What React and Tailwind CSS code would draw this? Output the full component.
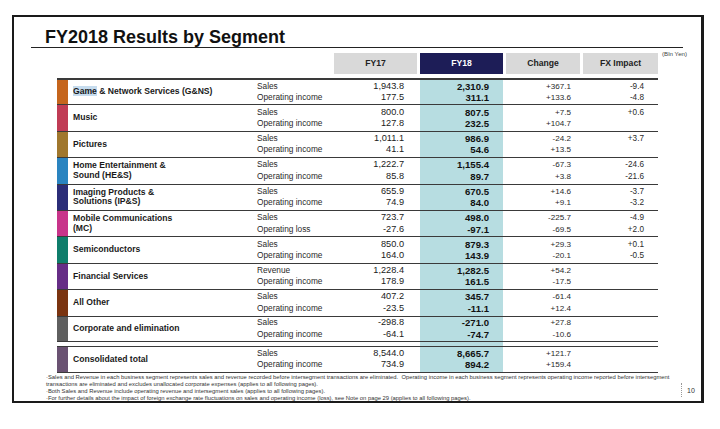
// FY2018 segment results slide
const rows = [
  { color: "bg-[#c5651d]", name: <><span className="bg-[#c6dcee]">Game</span> & Network Services (G&NS)</>, labels: ["Sales", "Operating income"], fy17: ["1,943.8", "177.5"], fy18: ["2,310.9", "311.1"], change: ["+367.1", "+133.6"], fx: ["-9.4", "-4.8"] },
  { color: "bg-[#c03c55]", name: "Music", labels: ["Sales", "Operating income"], fy17: ["800.0", "127.8"], fy18: ["807.5", "232.5"], change: ["+7.5", "+104.7"], fx: ["+0.6", ""] },
  { color: "bg-[#a0772d]", name: "Pictures", labels: ["Sales", "Operating income"], fy17: ["1,011.1", "41.1"], fy18: ["986.9", "54.6"], change: ["-24.2", "+13.5"], fx: ["+3.7", ""] },
  { color: "bg-[#2a84c0]", name: <>Home Entertainment &<br />Sound (HE&S)</>, labels: ["Sales", "Operating income"], fy17: ["1,222.7", "85.8"], fy18: ["1,155.4", "89.7"], change: ["-67.3", "+3.8"], fx: ["-24.6", "-21.6"] },
  { color: "bg-[#2b2d78]", name: <>Imaging Products &<br />Solutions (IP&S)</>, labels: ["Sales", "Operating income"], fy17: ["655.9", "74.9"], fy18: ["670.5", "84.0"], change: ["+14.6", "+9.1"], fx: ["-3.7", "-3.2"] },
  { color: "bg-[#c8348a]", name: <>Mobile Communications<br />(MC)</>, labels: ["Sales", "Operating loss"], fy17: ["723.7", "-27.6"], fy18: ["498.0", "-97.1"], change: ["-225.7", "-69.5"], fx: ["-4.9", "+2.0"] },
  { color: "bg-[#0f7d6b]", name: "Semiconductors", labels: ["Sales", "Operating income"], fy17: ["850.0", "164.0"], fy18: ["879.3", "143.9"], change: ["+29.3", "-20.1"], fx: ["+0.1", "-0.5"] },
  { color: "bg-[#662d86]", name: "Financial Services", labels: ["Revenue", "Operating income"], fy17: ["1,228.4", "178.9"], fy18: ["1,282.5", "161.5"], change: ["+54.2", "-17.5"], fx: ["", ""] },
  { color: "bg-[#7a3410]", name: "All Other", labels: ["Sales", "Operating income"], fy17: ["407.2", "-23.5"], fy18: ["345.7", "-11.1"], change: ["-61.4", "+12.4"], fx: ["", ""] },
  { color: "bg-[#5f5f5f]", name: "Corporate and elimination", labels: ["Sales", "Operating income"], fy17: ["-298.8", "-64.1"], fy18: ["-271.0", "-74.7"], change: ["+27.8", "-10.6"], fx: ["", ""] },
];

const total = { color: "bg-[#6a5272]", name: "Consolidated total", labels: ["Sales", "Operating income"], fy17: ["8,544.0", "734.9"], fy18: ["8,665.7", "894.2"], change: ["+121.7", "+159.4"], fx: ["", ""] };

function Pair({ values, className }) {
  return (
    <div className={"flex flex-col justify-center leading-[11.5px] " + className}>
      <div className="h-[11.5px]">{values[0]}</div>
      <div className="h-[11.5px]">{values[1]}</div>
    </div>
  );
}

function Row({ r, className }) {
  return (
    <div className={"flex border-[#3a3a3a] " + className}>
      <div className={"w-[11px] " + r.color} />
      <div className="w-[184px] pl-[5px] flex items-center font-bold text-[8.6px] leading-[9.6px] text-[#1a1a1a]">
        <div>{r.name}</div>
      </div>
      <Pair values={r.labels} className="w-[82px] pl-[5px] text-[8.3px] text-[#2a2a2a]" />
      <Pair values={r.fy17} className="w-[83px] pr-[13px] text-right text-[9.2px] text-[#1a1a1a]" />
      <Pair values={r.fy18} className="ml-[3px] w-[83px] pr-[14px] text-right text-[9.6px] font-bold text-[#111] bg-[#b7dde1]" />
      <Pair values={r.change} className="ml-[3px] w-[74px] pr-[9px] text-right text-[8.1px] text-[#2a2a2a]" />
      <Pair values={r.fx} className="ml-[3px] w-[75px] pr-[14px] text-right text-[8.2px] text-[#2a2a2a]" />
    </div>
  );
}

export default function App() {
  return (
    <div className="w-[720px] h-[429px] bg-white overflow-hidden font-['Liberation_Sans',Arial,sans-serif]">
      <div className="ml-[12px] mt-[15px] w-[692px] h-[388px] border-2 border-[#1a1a1a] border-r-[3px] overflow-hidden">
        {/* Title */}
        <div className="ml-[17px] mt-[9px] w-[652px] h-[22px] border-b border-[#222] pl-[14px] text-[18px] leading-[22px] font-bold text-[#111]">
          FY2018 Results by Segment
        </div>

        {/* Column headers */}
        <div className="ml-[43px] mt-[5px] flex">
          <div className="flex h-[21px] text-[8.6px] font-bold">
            <div className="w-[277px]" />
            <div className="w-[83px] bg-[#d9d9d9] flex items-center justify-center text-[#222]">FY17</div>
            <div className="ml-[3px] w-[83px] bg-[#1d1d57] flex items-center justify-center text-white">FY18</div>
            <div className="ml-[3px] w-[74px] bg-[#d9d9d9] flex items-center justify-center text-[#222]">Change</div>
            <div className="ml-[3px] w-[75px] bg-[#d9d9d9] flex items-center justify-center text-[#222]">FX Impact</div>
          </div>
          <div className="ml-[4px] -mt-[4px] text-[6.2px] text-[#444]">(Bln Yen)</div>
        </div>

        {/* Table */}
        <div className="ml-[43px] mt-[4px] w-[601px]">
          {rows.map((r, i) => (
            <Row
              key={i}
              r={r}
              className={
                "h-[26.4px] " +
                (i === 0 ? "border-t-2 " : "border-t ") +
                (i === rows.length - 1 ? "border-b" : "")
              }
            />
          ))}
          <div className="flex h-[4px]">
            <div className="ml-[363px] w-[83px] bg-[#b7dde1]" />
          </div>
          <Row r={total} className="h-[27px] border-t border-b" />
        </div>

        {/* Footnotes */}
        <div className="flex mt-[1px]">
          <div className="ml-[32px] w-[635px] text-[5.85px] leading-[7.1px] text-[#333] whitespace-pre">
            <div>·Sales and Revenue in each business segment represents sales and revenue recorded before intersegment transactions are eliminated.  Operating income in each business segment represents operating income reported before intersegment</div>
            <div>transactions are eliminated and excludes unallocated corporate expenses (applies to all following pages).</div>
            <div>·Both Sales and Revenue include operating revenue and intersegment sales (applies to all following pages).</div>
            <div>·For further details about the impact of foreign exchange rate fluctuations on sales and operating income (loss), see Note on page 29 (applies to all following pages).</div>
          </div>
          <div className="mt-[9px] h-[14px] border-l border-dotted border-[#999]" />
          <div className="mt-[13px] pl-[5px] text-[7px] leading-[8px] text-[#333]">10</div>
        </div>
      </div>
    </div>
  );
}
